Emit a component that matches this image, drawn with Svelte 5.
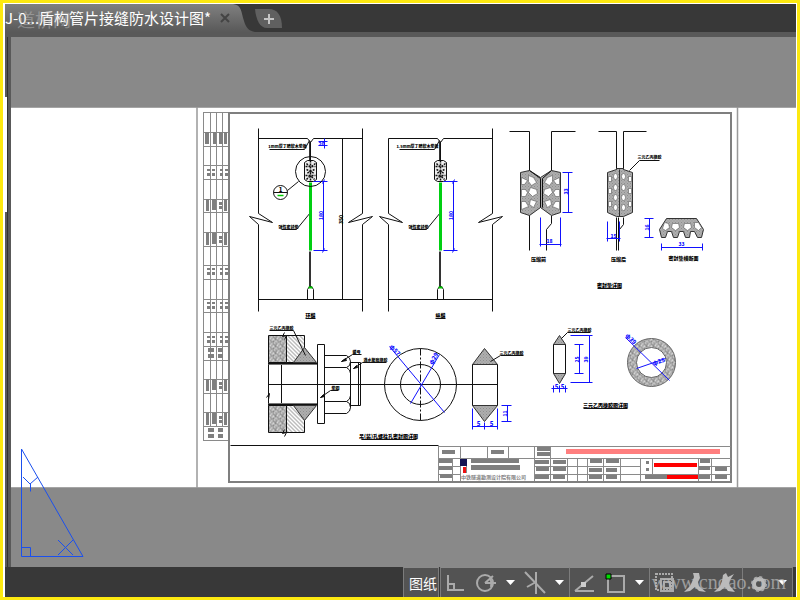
<script lang="ts">
  interface Label {
    readonly text: string;
    readonly x: number;
    readonly y: number;
    readonly size?: number;
    readonly turn?: number;
  }

  type Box = readonly [number, number, number, number];

  const tabTitle = "J-0...盾构管片接缝防水设计图*";

  const joints = [
    { x: 0, name: "环缝", pad: "1mm厚丁腈软木垫板", seal: "弹性密封垫", top: 128 },
    { x: 130, name: "纵缝", pad: "1.5mm厚丁腈软木垫板", seal: "弹性密封垫", top: 138 },
  ];

  const notes: readonly Label[] = [
    { text: "压缩前", x: 538, y: 260, size: 5 },
    { text: "压缩后", x: 618, y: 260, size: 5 },
    { text: "密封垫横断面", x: 683, y: 259, size: 5 },
    { text: "密封垫详图", x: 609, y: 286, size: 5 },
    { text: "三元乙丙橡胶", x: 649, y: 158, size: 4 },
    { text: "三元乙丙橡胶", x: 281, y: 329, size: 4 },
    { text: "螺母", x: 356, y: 353, size: 4 },
    { text: "遇水膨胀橡胶", x: 375, y: 361, size: 4 },
    { text: "垫圈", x: 335, y: 389, size: 4 },
    { text: "吊(装)孔螺栓孔密封圈详图", x: 388, y: 437, size: 5 },
    { text: "三元乙丙橡胶", x: 511, y: 354, size: 4 },
    { text: "三元乙丙橡胶", x: 579, y: 331, size: 4 },
    { text: "三元乙丙橡胶圈详图", x: 605, y: 406, size: 5 },
    { text: "350", x: 342, y: 219, size: 5, turn: -90 },
  ];

  const dims: readonly Label[] = [
    { text: "20", x: 321, y: 145, size: 5 },
    { text: "33", x: 567, y: 191, size: 5, turn: -90 },
    { text: "18", x: 549, y: 242, size: 5 },
    { text: "15", x: 613, y: 237, size: 5 },
    { text: "16", x: 648, y: 227, size: 5, turn: -90 },
    { text: "33", x: 681, y: 245, size: 5 },
    { text: "φ57", x: 393, y: 351, size: 6, turn: 48 },
    { text: "φ29", x: 435, y: 359, size: 6, turn: -60 },
    { text: "5", x: 478, y: 425, size: 6 },
    { text: "5", x: 491, y: 425, size: 6 },
    { text: "11", x: 506, y: 413, size: 5, turn: -90 },
    { text: "25", x: 578, y: 359, size: 5, turn: -90 },
    { text: "39", x: 587, y: 359, size: 5, turn: -90 },
    { text: "5", x: 556, y: 388, size: 6 },
    { text: "5", x: 562, y: 388, size: 6 },
    { text: "φ39", x: 629, y: 340, size: 6, turn: 45 },
    { text: "φ25", x: 659, y: 363, size: 6, turn: -18 },
  ];

  // signature strip left of the frame
  const stripLines = [132, 146, 165, 179, 199, 212, 232, 246, 265, 279, 299, 312, 332, 346, 360, 379, 393, 412, 426, 440];
  const solidRows = [132];
  const mixedRows = [199, 233, 379, 413];
  const dottedRows = [169, 268, 302, 336];
  const blockRows = [348, 428];

  const titleBlocks: readonly Box[] = [
    [442, 450, 13, 4], [491, 450, 13, 4], [537, 447, 13, 4], [537, 452, 13, 4],
    [439, 459, 13, 4], [439, 466, 13, 4], [440, 474, 12, 4],
    [471, 459, 48, 4], [471, 465, 49, 5],
    [535, 460, 14, 4], [536, 467, 13, 4], [535, 475, 14, 4],
    [553, 460, 13, 4], [553, 467, 13, 4], [553, 475, 12, 4],
    [590, 459, 12, 4], [589, 468, 13, 4], [589, 475, 13, 4],
    [606, 459, 13, 4], [606, 468, 11, 4], [606, 475, 11, 4],
    [646, 461, 3, 3], [646, 468, 3, 3], [645, 475, 22, 4],
    [700, 459, 10, 4], [699, 466, 11, 4], [699, 475, 11, 4],
    [715, 467, 12, 4], [715, 475, 12, 4],
  ];
</script>

{#snippet caption(label: Label)}
  <text
    x={label.x}
    y={label.y}
    font-size={label.size ?? 5}
    text-anchor="middle"
    transform={label.turn ? `rotate(${label.turn} ${label.x} ${label.y})` : undefined}>{label.text}</text>
{/snippet}

{#snippet caret(name: string)}
  <button class="tool caret" aria-label={name}>
    <svg viewBox="0 0 19 28"><path d="M5 11h9l-4.500 5z" fill="#fff" /></svg>
  </button>
{/snippet}

<div class="window">
  <header>
    <div class="tab">
      <button class="title">{tabTitle}</button>
      <button class="close" aria-label="关闭">
        <svg viewBox="0 0 12 12"><path d="M2 2l8 8M10 2l-8 8" /></svg>
      </button>
      <span class="ghost">道桥网</span>
    </div>
    <svg class="slope" viewBox="0 0 22 28" aria-hidden="true">
      <defs>
        <linearGradient id="tabfill" x2="0" y2="1">
          <stop offset="0" stop-color="#808080" />
          <stop offset="1" stop-color="#595959" />
        </linearGradient>
      </defs>
      <path d="M0 0C9 1 8 8 11 17C13 24 16 27 22 28H0z" fill="url(#tabfill)" />
    </svg>
    <button class="add" aria-label="新建">
      <svg viewBox="0 0 28 20">
        <path d="M0 0H14C22 0 27 6 27 19H12C5 19 1 11 0 0z" fill="#606060" />
        <path d="M9 10h10M14 5v10" stroke="#c4c4c4" stroke-width="2" />
      </svg>
    </button>
  </header>

  <main>
    <aside><span></span><span class="open"></span><span></span></aside>
    <svg class="canvas" viewBox="11 37 785 530" preserveAspectRatio="xMidYMid slice" role="img" aria-label="图纸布局">
      <defs>
        <pattern id="mesh" width="3" height="3" patternUnits="userSpaceOnUse">
          <rect width="3" height="3" fill="#ccc" />
          <path d="M0 0l3 3M3 0l-3 3" stroke="#666" stroke-width=".6" />
        </pattern>
        <pattern id="slant" width="4" height="4" patternUnits="userSpaceOnUse">
          <path d="M-1 -1l6 6M-1 3l2 2M3 -1l2 2" stroke="#555" stroke-width=".8" />
        </pattern>
        <pattern id="concrete" width="7" height="7" patternUnits="userSpaceOnUse">
          <rect width="7" height="7" fill="#d4d4d4" />
          <path d="M0 1h1M3 0h1M5 2h1M1 3h2M4 4h1M6 5h1M2 6h1M0 5h1M4 6h1M2 1h1M6 0h1" stroke="#444" />
          <path d="M0 0l2 2M3 3l2 2M5 5l2 2" stroke="#777" stroke-width=".6" />
        </pattern>
      </defs>

      <rect x="11" y="37" width="785" height="530" fill="#898989" />
      <rect x="11" y="107" width="785" height="381" fill="#fff" />
      <path d="M11 107.500H796M11 487.500H796" stroke="#a5a5a5" />
      <path d="M197 107V488M737.500 107V488" stroke="#999" stroke-width="1.500" />
      <rect x="229" y="113" width="502" height="369" fill="none" stroke="#7f7f7f" stroke-width="2" />

      <g class="strip">
        <path d="M203.500 112V440M210.500 112V426M216.500 112V426M222.500 112V426M203 112.500H228" />
        {#each stripLines as y (y)}
          <path d={`M203 ${y}.5H228`} />
        {/each}
        {#each solidRows as y (y)}
          <path class="fill" d={`M205 ${y}h4v12h-4zM213 ${y}h3v12h-3zM219 ${y}h4v12h-4zM224 ${y}h3v12h-3z`} />
        {/each}
        {#each mixedRows as y (y)}
          <path class="fill" d={`M206 ${y}h3v12h-3zM212 ${y}h4v11h-4zM219 ${y + 3}h3v3h-3zM219 ${y + 7}h3v3h-3zM224 ${y}h3v12h-3z`} />
        {/each}
        {#each dottedRows as y (y)}
          <path class="fill" d={`M207 ${y}h3v2h-3zM207 ${y + 4}h3v3h-3zM212 ${y}h3v2h-3zM212 ${y + 4}h3v3h-3zM220 ${y}h3v2h-3zM220 ${y + 4}h3v3h-3zM225 ${y}h3v2h-3zM225 ${y + 4}h3v3h-3z`} />
        {/each}
        {#each blockRows as y (y)}
          <path class="fill" d={`M208 ${y}h6v4h-6zM208 ${y + 6}h6v4h-6zM218 ${y}h5v4h-5zM218 ${y + 6}h5v4h-5z`} />
        {/each}
      </g>

      <g class="strip">
        <path d="M438.500 446V481M460.500 446V481M487.500 446V458M508.500 446V458M534.500 446V481M550.500 446V481M452.500 458V481M567.500 458V481M577.500 458V481M587.500 458V481M603.500 458V481M620.500 458V481M640.500 458V481M652.500 458V474M698.500 458V481M711.500 458V481" />
        <path d="M438 446.500H731M438 458.500H731M438 466.500H460M534 466.500H640M698 466.500H731M438 474.500H460M534 474.500H731" />
        {#each titleBlocks as [x, y, w, h] (`${x}-${y}`)}
          <rect class="fill" {x} {y} width={w} height={h} />
        {/each}
        <rect x="566" y="449" width="154" height="5" fill="#ff7f7f" />
        <path d="M654 463h43v4h-43zM667 475h31v4h-31z" fill="#f00" />
        <path d="M460 459h7v7h-7z" fill="#141452" />
        <path d="M463 467h3v6h-3z" fill="#e11" />
        <path d="M466.500 466v7" stroke="#000" />
        <text x="461" y="479" font-size="5" font-weight="700" fill="#7f7f7f">中铁隧道勘测设计院有限公司</text>
      </g>

      <g class="ink" transform="translate(.5 .5)">
        <path d="M230 445H438" />

        {#each joints as joint (joint.name)}
          <g transform={`translate(${joint.x} 0)`}>
            <path d={`M258 ${joint.top}V213L272 222L249 216L258 224V311`} />
            <path d="M362 128V213L348 222L372 216L362 224V311" />
            <path d="M258 138H307L310 142L313 138H362M310 141V161M258 299H362" />
            <path d="M309 141V161M309 251V286M310 251V286" stroke="#333" />
            <path d="M307 299V289L309 286H311L313 289V299" />
            <path d="M269 149H304L309 140M281 229H296L310 212" />
            <path d="M304 162L307 160H313L316 162V179L313 181H307L304 179z" fill="#eee" />
            <path d="M310 160V181M305 166H315M305 175H315M306 163l3 3m2 0l4-3M306 169l8 4m0-4l-8 4M306 179l3-3m2 0l3 3" stroke-width="1.500" stroke-dasharray="2 1" />
            <path d="M310 182V250" stroke="#00cf12" stroke-width="3" />
            <path d="M308 287H312" stroke="#0c0" stroke-width="2" />
            <path class="blue" d="M313 181H327M313 250H327M323 181V250M322 183l2-4M322 252l2-4" />
            <path d="M305 318H315" />
            {@render caption({ text: joint.pad, x: 287, y: 147, size: 4 })}
            {@render caption({ text: joint.seal, x: 288, y: 228, size: 4 })}
            {@render caption({ text: joint.name, x: 310, y: 316, size: 5 })}
            <g class="dim">{@render caption({ text: "180", x: 322, y: 215, size: 5, turn: -90 })}</g>
          </g>
        {/each}

        <circle cx="310" cy="171" r="15" />
        <circle cx="280" cy="192" r="7" />
        <path d="M273 192H287M287 190L298 181M342 138V299M339 138H345M339 299H345" />
        <path d="M277 195H283" stroke="#0c0" stroke-width="1.500" />
        {@render caption({ text: "1", x: 280, y: 191, size: 6 })}
        <path class="blue" d="M318 141H327M318 145H327M324 138V148" />

        <!-- gasket before and after compression -->
        <path d="M509 131H529V170M575 131H551V170M529 214V250M551 215V223L546 229V250" />
        <path class="mesh" d="M520 172L529 170L540 177L551 170L560 172V212L551 215L540 207L529 215L520 212z" />
        <path d="M529 170L540 178V207M551 170L542 178V207" />
        <g class="holes">
          <path d="M521 177l6 3-3 4h-3zM521 189h4l2 3-2 4h-4zM521 201h4l3 5-7 3zM528 175l5 2 3 5-5 3-3-4zM530 187l6 2 1 4-5 3-4-4zM530 199l6 2-3 6-4-3z" />
          <path d="M559 177l-6 3 3 4h3zM559 189h-4l-2 3 2 4h4zM559 201h-4l-3 5 7 3zM552 175l-5 2-3 5 5 3 3-4zM550 187l-6 2-1 4 5 3 4-4zM550 199l-6 2 3 6 4-3z" />
        </g>
        <path d="M598 131H616V170M646 131H623V170M616 217V250M618 217V250M623 217V224L619 229" />
        <path class="mesh" d="M607 172L616 169V168H623V169L632 172V212L623 216H616L607 212zM619 169V216" />
        <g class="holes">
          <path d="M608 176h3v5h-3zM608 188h3v5h-3zM608 201h3v5h-3zM631 176h-3v5h3zM631 188h-3v5h3zM631 201h-3v5h3z" />
          {#each [176, 187, 197, 207] as y (y)}
            <ellipse cx="615" cy={y} rx="2" ry="3" />
            <ellipse cx="623" cy={y} rx="2" ry="3" />
          {/each}
        </g>
        <path d="M629 170L639 160H659" />
        <path class="mesh" d="M666 218H696L703 229L701 237H697L694 231H690L689 237H685L683 231H679L677 237H673L671 231H667L665 237H661L659 229z" />
        <g class="holes">
          <path d="M664 222l4 1 1 4-4 3-3-2zM672 223h6l1 4-4 3-4-3zM684 223h6l1 4-4 3-4-3zM694 222l4 0 3 5-3 3-4-3z" />
        </g>
        <path d="M597 288H621" />
        <path class="blue" d="M562 172H572M562 212H572M568 172V212M540 217V246M560 217V246M539 244H561M607 221V241M619 221V241M606 238H620M644 218H653M644 237H653M649 218V237M661 243V250M702 243V250M661 247H702" />

        <!-- grouting hole section -->
        <path d="M268 335H286V362H268zM268 405H286V432H268z" fill="url(#concrete)" />
        <path d="M286 335H304V362H286zM286 405H304V432H286z" fill="url(#slant)" />
        <path class="mesh" d="M293 362L304 347L316 362zM293 405L304 420L316 405z" />
        <path d="M268 362V405M268 363H317M268 404H317M281 364V403M268 384H497M284 332l-2 4 4-1-2 4M284 429l-2 4 4-1-2 4M266 397l3-4-1 6" />
        <path d="M268 364H317M268 403H317" stroke="#777" />
        <path d="M317 344H324V423H317zM324 355H346Q350 357 350 361V407Q350 411 346 413H324M324 367H346Q350 366 350 361M324 401H346Q350 402 350 407M346 367Q350 369 350 373M346 401Q350 399 350 395M350 362H360V405H350M358 362V405" />
        <path d="M269 330H293L305 355M361 354H352L341 361M386 362H362L353 368M338 390H330L320 397M361 439H416" />
        <path d="M341 361l4-3 1 2zM353 368l3-3 1 2zM320 397l3-3 1 2z" fill="#000" />

        <circle cx="420" cy="384" r="36" />
        <circle cx="420" cy="384" r="20" />
        <path d="M420 348V420" stroke-dasharray="7 2 2 2" />
        <path class="mesh" d="M472 364L484 348L497 364zM472 405L484 421L497 405z" />
        <path d="M472 364V405M497 364V405M490 361L500 355H523" />
        <path class="blue" d="M389 346L444 412M439 354L410 403M472 408V429M484 422V429M497 408V429M472 426H497M501 405H511M501 421H511M507 405V421" />

        <!-- rubber ring -->
        <path class="mesh" d="M553 344L559 335L565 344zM553 373L559 383L565 373z" />
        <path d="M553 344V373M565 344V373M561 338L567 332H590M583 408H627" />
        <path fill="url(#concrete)" fill-rule="evenodd" stroke="#666" d="M627 362a24 24 0 1 0 48 0a24 24 0 1 0-48 0zM636 362a15 15 0 1 0 30 0a15 15 0 1 0-30 0z" />
        <path class="blue" d="M553 385V392M559 385V392M565 385V392M551 388H567M574 344H583M574 373H583M579 344V373M570 335H592M570 382H592M589 335V382M625 337L669 380M636 368L665 358" />

        {#each notes as note (`${note.x}-${note.y}`)}
          {@render caption(note)}
        {/each}
        <g class="dim">
          {#each dims as dim (`${dim.x}-${dim.y}`)}
            {@render caption(dim)}
          {/each}
        </g>
      </g>

      <!-- UCS icon -->
      <path
        class="ucs"
        d="M21.500 449V556.500H83zM21 547.500H30.500V556M23 477l7 7 8-7M30.500 484v7.500M58 540l15 15M58 555l15-15" />
    </svg>
  </main>

  <footer>
    <div class="group model"><button class="space">图纸</button></div>
    <div class="group">
      <button class="tool" aria-label="正交">
        <svg viewBox="0 0 30 28"><path d="M7 6v15h16M7 15h6v6" /></svg>
      </button>
      <button class="tool" aria-label="极轴追踪">
        <svg viewBox="0 0 30 28"><circle cx="14" cy="14" r="8" /><path d="M14 14h11M14 14l8-7M19 10q2 2 1 8" /></svg>
      </button>
      {@render caret("极轴选项")}
      <button class="tool" aria-label="等轴测">
        <svg viewBox="0 0 30 28"><path d="M5 3l20 21M16 3v22M7 18l9-5" /></svg>
      </button>
      {@render caret("等轴测选项")}
    </div>
    <div class="group">
      <button class="tool" aria-label="对象捕捉追踪">
        <svg viewBox="0 0 30 28"><path d="M5 22h19M5 22l18-15" /><path d="M11 13h5v5h-5z" fill="#ccc" stroke="none" /></svg>
      </button>
      <button class="tool" aria-label="对象捕捉">
        <svg viewBox="0 0 30 28"><path d="M8 7h16v16H8z" /><path d="M6 5h5v5H6z" fill="#0d0" stroke="#000" stroke-width="1" /></svg>
      </button>
      {@render caret("捕捉选项")}
    </div>
    <div class="group wide">
      <button class="tool" aria-label="选择循环">
        <svg viewBox="0 0 30 28"><path d="M6 5h16v16H6z" stroke-dasharray="2 1" /><path d="M11 10h12v12H11zM14 13h6v6h-6z" /></svg>
      </button>
      <button class="tool" aria-label="注释可见性">
        <svg viewBox="0 0 30 28"><path class="solid" d="M13 4h6l1 5-2 4 1 4 7 6-7-1-4-4-5 4-6 1 6-6 2-4 2-5z" /></svg>
      </button>
      <button class="tool" aria-label="自动缩放">
        <svg viewBox="0 0 30 28"><path class="solid" d="M13 6l3-2 2 4 6-3-4 6-1 5 6 7-7-1-3-4-5 4-6 1 6-6 2-5z" /></svg>
      </button>
    </div>
    <div class="group last">
      <button class="tool" aria-label="切换工作空间">
        <svg viewBox="0 0 30 28"><circle class="gear" cx="16" cy="15" r="5" /><circle cx="16" cy="15" r="7" stroke-width="2" stroke-dasharray="3 2.500" /></svg>
      </button>
      {@render caret("工作空间选项")}
    </div>
    <span class="watermark">www.cndao.com</span>
  </footer>
</div>

<style>
  :global(body) {
    margin: 0;
  }

  .window {
    box-sizing: border-box;
    min-height: 100vh;
    padding: 1px 1px 0 2px;
    border: 3px solid #fde910;
    background: #fff;
    display: grid;
    grid-template-columns: minmax(0, 1fr);
    grid-template-rows: 33px minmax(0, 1fr) 30px;
    font-family: "Noto Sans CJK SC", sans-serif;
  }

  button {
    margin: 0;
    padding: 0;
    border: 0;
    background: none;
    color: #fff;
    font: inherit;
  }

  button svg {
    display: block;
  }

  header {
    box-sizing: border-box;
    border-bottom: 5px solid #595959;
    background: #383838;
    display: flex;
  }

  .tab {
    position: relative;
    padding-right: 2px;
    background: linear-gradient(#808080, #595959);
    display: flex;
    align-items: center;
    gap: 8px;
  }

  .title {
    font-size: 15px;
    line-height: 30px;
    white-space: nowrap;
  }

  .close svg {
    width: 12px;
    height: 12px;
    stroke: #444;
    stroke-width: 2;
  }

  .ghost {
    position: absolute;
    left: 12px;
    top: 3px;
    color: #ccc;
    font-size: 18px;
    line-height: 24px;
    opacity: 0.4;
    pointer-events: none;
  }

  .slope {
    width: 22px;
    height: 28px;
  }

  .add {
    padding-top: 2px;
  }

  .add svg {
    width: 28px;
    height: 20px;
  }

  main {
    display: flex;
    min-height: 0;
  }

  aside {
    width: 6px;
    background: #595959;
    display: grid;
    grid-template-rows: 60px 115px 1fr;
  }

  aside span {
    width: 2px;
    border-right: 1px solid #333;
  }

  aside .open {
    background: #fff;
  }

  .canvas {
    display: block;
    flex: 1;
    min-width: 0;
    width: 0;
    height: 100%;
  }

  .ink path,
  .ink circle {
    stroke: #111;
  }

  .ink path:not([fill]),
  .ink circle {
    fill: none;
  }

  .ink path[stroke] {
    stroke: revert-layer;
  }

  .ink text {
    fill: #000;
    font-weight: 900;
  }

  .ink .dim text {
    fill: #11f;
  }

  .ink path.blue {
    stroke: #11f;
  }

  .ink path.mesh {
    fill: url(#mesh);
    stroke: #333;
  }

  .ink .holes path,
  .holes ellipse {
    fill: #fff;
    stroke: #444;
    stroke-width: 0.5;
  }

  .strip path:not([fill]) {
    fill: none;
    stroke: #8a8a8a;
  }

  .strip path.fill,
  .strip .fill {
    fill: #7f7f7f;
    stroke: none;
  }

  .ucs {
    fill: none;
    stroke: #1b50ee;
  }

  footer {
    position: relative;
    padding-right: 3px;
    background: #383838;
    display: flex;
    justify-content: flex-end;
  }

  .group {
    border-top: 1px solid #8a8a8a;
    border-left: 1px solid #7c7c7c;
    background: #535353;
    display: flex;
  }

  .model {
    border-right: 1px solid #7c7c7c;
    margin-right: 1px;
  }

  .wide {
    padding-right: 2px;
  }

  .last {
    border-right: 1px solid #7c7c7c;
  }

  .space {
    padding: 0 1px 0 5px;
    font-size: 14px;
    line-height: 28px;
  }

  .tool {
    width: 30px;
  }

  .caret {
    width: 19px;
  }

  .tool svg {
    width: 100%;
    height: 28px;
    fill: none;
    stroke: #aaa;
    stroke-width: 2;
  }

  .caret svg {
    stroke: none;
  }

  .tool .solid {
    fill: #bbb;
    stroke: none;
  }

  .tool .gear {
    stroke: #bbb;
    stroke-width: 4;
  }

  .watermark {
    position: absolute;
    right: 10px;
    top: 3px;
    color: #bbb;
    font-family: "Liberation Serif", serif;
    font-size: 20px;
    line-height: 24px;
    opacity: 0.7;
    pointer-events: none;
  }
</style>
